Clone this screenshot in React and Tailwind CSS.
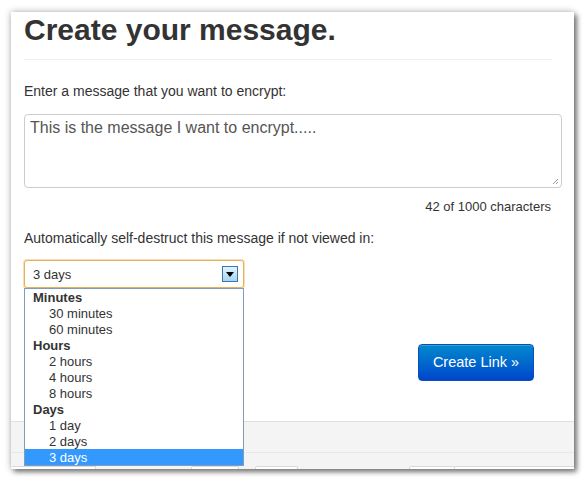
import React from 'react';

const groups = [
  { label: 'Minutes', items: ['30 minutes', '60 minutes'] },
  { label: 'Hours', items: ['2 hours', '4 hours', '8 hours'] },
  { label: 'Days', items: ['1 day', '2 days', '3 days'] },
];

function OpenSelect() {
  return (
    <div className="relative w-[220px]">
      <div className="h-[28px] rounded-[3px] border border-[#e3b25c] shadow-[0_0_0_1px_#f6dfb4] bg-white flex items-center justify-between pl-[8px] pr-[5px]">
        <span className="text-[13px] leading-[18px] pt-[1px] text-[#333]">3 days</span>
        <span className="w-[16px] h-[16px] border border-[#3b78aa] bg-gradient-to-b from-[#e3f3fd] to-[#a4d4f4] flex items-center justify-center">
          <svg width="8" height="5" viewBox="0 0 8 5">
            <path d="M0 0h8L4 5z" fill="#000" />
          </svg>
        </span>
      </div>
      <ul className="absolute left-0 top-[28px] z-10 w-[220px] border border-[#7f9db9] bg-white text-[13px] text-[#333]">
        {groups.map((g) => (
          <li key={g.label}>
            <div className="h-[16px] leading-[18px] overflow-hidden pl-[8px] font-bold">{g.label}</div>
            {g.items.map((it) => (
              <div
                key={it}
                className={
                  it === '3 days'
                    ? 'h-[16px] leading-[18px] overflow-hidden pl-[24px] bg-[#3399ff] text-white'
                    : 'h-[16px] leading-[18px] overflow-hidden pl-[24px]'
                }
              >
                {it}
              </div>
            ))}
          </li>
        ))}
      </ul>
    </div>
  );
}

export default function App() {
  return (
    <div className="min-h-screen bg-white pt-[12px] pl-[11px] font-['Liberation_Sans',Arial,sans-serif] text-[#333]">
      <div className="w-[563px] h-[457px] bg-white flex flex-col shadow-[0_0_7px_rgba(0,0,0,0.3),3px_3px_5px_rgba(0,0,0,0.45)]">
        <div className="flex-1 px-[13px]">
          <h1 className="w-[528px] text-[30px] leading-[36px] font-bold text-[#333] pb-[11px] border-b border-[#eee]">
            Create your message.
          </h1>

          <p className="mt-[21px] text-[14px] leading-[20px]">Enter a message that you want to encrypt:</p>

          <div className="mt-[13px] w-[538px] h-[74px] rounded-[4px] border border-[#ccc] pl-[5px] pt-[3px] text-[16px] leading-[20px] text-[#555] relative">
            This is the message I want to encrypt.....
            <svg className="absolute right-[2px] bottom-[2px]" width="7" height="7" viewBox="0 0 7 7">
              <path d="M6 1L1 6M6 4L4 6" stroke="#999" strokeWidth="1" />
            </svg>
          </div>

          <p className="mt-[10px] w-[527px] text-right text-[13px] leading-[18px]">42 of 1000 characters</p>

          <p className="mt-[12px] text-[14px] leading-[20px]">
            Automatically self-destruct this message if not viewed in:
          </p>

          <div className="mt-[12px]">
            <OpenSelect />
          </div>

          <div className="mt-[56px] w-[528px] flex justify-end pr-[18px]">
            <button className="w-[116px] h-[37px] rounded-[4px] border border-[#0a4fb8] bg-gradient-to-b from-[#0088cc] to-[#0044cc] text-white text-[14.5px] shadow-[inset_0_1px_0_rgba(255,255,255,0.2)]">
              Create Link »
            </button>
          </div>
        </div>

        <div className="h-[48px] border-t border-[#e0e0e0] bg-[#f4f4f4] flex flex-col">
          <div className="h-[30px]" />
          <div className="flex-1 border-t border-[#e8e8e8] flex items-end">
            <div className="ml-[1px] w-[84px] h-[3px] border-t border-r border-[#d9d9d9] bg-white" />
            <div className="ml-[95px] w-[48px] h-[3px] border-t border-x border-[#d9d9d9] bg-white rounded-t-[2px]" />
            <div className="ml-[16px] w-[43px] h-[3px] border-t border-x border-[#d9d9d9] bg-white rounded-t-[2px]" />
            <div className="ml-[111px] w-[46px] h-[3px] border-t border-x border-[#d9d9d9] bg-white rounded-t-[2px]" />
            <div className="flex-1 h-[3px] border-t border-[#d9d9d9] bg-white" />
          </div>
        </div>
      </div>
    </div>
  );
}
